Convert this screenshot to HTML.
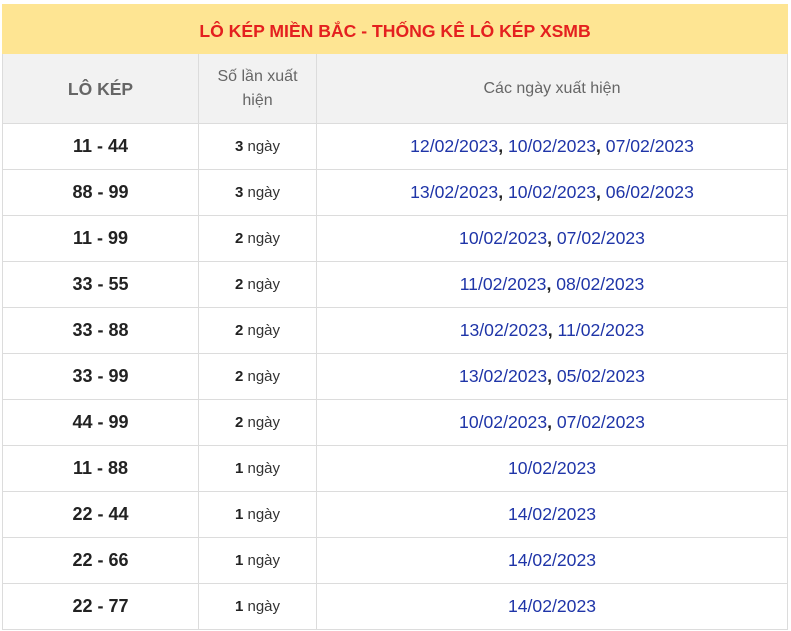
<!DOCTYPE html>
<html><head><meta charset="utf-8"><style>
body{margin:0;background:#fff;font-family:"Liberation Sans",Arial,sans-serif;}
table{position:absolute;left:2px;top:4px;width:786px;border-collapse:collapse;table-layout:fixed;}
td,th{border:1px solid #dcdcdc;text-align:center;padding:0;}
.t{background:#fee593;color:#e4201f;font-weight:bold;font-size:17.6px;height:49px;padding-top:5px;box-sizing:border-box;border-color:#fee593}
.h th{background:#f2f2f2;color:#666;font-weight:normal;font-size:16px;height:70px;line-height:24px;padding-top:1px;box-sizing:border-box}
.h th.a{font-weight:bold;font-size:17.5px}
tr.r td{height:45px;}
td.a{font-weight:bold;font-size:18px;color:#222}
td.b{font-size:15px;color:#333}
td.b b{color:#222}
td.c{font-size:17.6px;color:#1f35a8}
td.c b{color:#222}
</style></head><body>
<table>
<col style="width:196px"><col style="width:118px"><col>
<tr><td class="t" colspan="3">LÔ KÉP MIỀN BẮC - THỐNG KÊ LÔ KÉP XSMB</td></tr>
<tr class="h"><th class="a">LÔ KÉP</th><th>Số lần xuất<br>hiện</th><th>Các ngày xuất hiện</th></tr>
<tr class="r"><td class="a">11 - 44</td><td class="b"><b>3</b> ngày</td><td class="c">12/02/2023<b>,</b> 10/02/2023<b>,</b> 07/02/2023</td></tr>
<tr class="r"><td class="a">88 - 99</td><td class="b"><b>3</b> ngày</td><td class="c">13/02/2023<b>,</b> 10/02/2023<b>,</b> 06/02/2023</td></tr>
<tr class="r"><td class="a">11 - 99</td><td class="b"><b>2</b> ngày</td><td class="c">10/02/2023<b>,</b> 07/02/2023</td></tr>
<tr class="r"><td class="a">33 - 55</td><td class="b"><b>2</b> ngày</td><td class="c">11/02/2023<b>,</b> 08/02/2023</td></tr>
<tr class="r"><td class="a">33 - 88</td><td class="b"><b>2</b> ngày</td><td class="c">13/02/2023<b>,</b> 11/02/2023</td></tr>
<tr class="r"><td class="a">33 - 99</td><td class="b"><b>2</b> ngày</td><td class="c">13/02/2023<b>,</b> 05/02/2023</td></tr>
<tr class="r"><td class="a">44 - 99</td><td class="b"><b>2</b> ngày</td><td class="c">10/02/2023<b>,</b> 07/02/2023</td></tr>
<tr class="r"><td class="a">11 - 88</td><td class="b"><b>1</b> ngày</td><td class="c">10/02/2023</td></tr>
<tr class="r"><td class="a">22 - 44</td><td class="b"><b>1</b> ngày</td><td class="c">14/02/2023</td></tr>
<tr class="r"><td class="a">22 - 66</td><td class="b"><b>1</b> ngày</td><td class="c">14/02/2023</td></tr>
<tr class="r"><td class="a">22 - 77</td><td class="b"><b>1</b> ngày</td><td class="c">14/02/2023</td></tr>
</table>
</body></html>
